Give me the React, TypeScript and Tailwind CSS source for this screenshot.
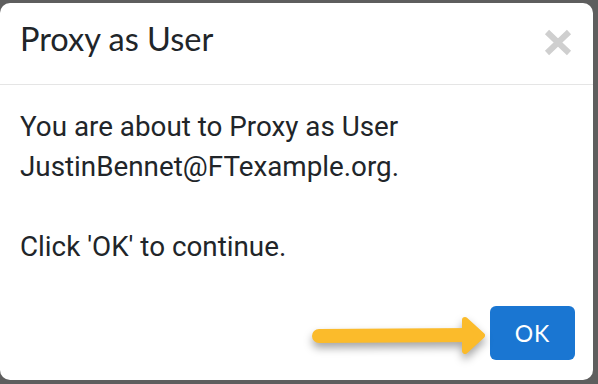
import React from "react";

export default function App() {
  return (
    <div className="w-[598px] h-[384px] bg-[#5e5e5e] pt-[3px] pr-[5px] pb-[4px] overflow-hidden">
      <div className="w-full h-full bg-white rounded-[10px] flex flex-col">
        <div className="h-[82px] border-b border-[#e5e5e5] flex items-start justify-between pl-[20px] pr-[21px] pt-[13px]">
          <div className="text-[32.5px] leading-[46px] text-[#212529]" style={{ fontFamily: "Lato, 'Noto Sans', sans-serif" }}>
            Proxy as User
          </div>
          <svg width="28" height="27" viewBox="0 0 28 27" className="mt-[13px]">
            <path d="M3 3 L25 24 M25 3 L3 24" stroke="#cfcfcf" strokeWidth="6" />
          </svg>
        </div>
        <div className="flex-1 pl-[20px] pt-[22px] text-[27.8px] leading-[40px] text-[#212529]" style={{ fontFamily: "Roboto, 'Liberation Sans', sans-serif" }}>
          <p>You are about to Proxy as User</p>
          <p>JustinBennet@FTexample.org.</p>
          <p className="mt-[40px]">Click 'OK' to continue.</p>
        </div>
        <div className="flex items-center justify-end pr-[18px] pb-[20px]">
          <svg width="190" height="50" viewBox="0 0 190 50" className="mr-[2px] drop-shadow-[0_5px_4px_rgba(0,0,0,0.35)]">
            <line x1="21" y1="28" x2="175" y2="27" stroke="#fbbb2b" strokeWidth="14" strokeLinecap="round" />
            <polygon points="167,12 184,27.5 167,43" fill="#fbbb2b" stroke="#fbbb2b" strokeWidth="6" strokeLinejoin="round" />
          </svg>
          <button className="w-[85px] h-[54px] rounded-[6px] bg-[#1a76d2] text-white text-[23px] tracking-[1px]" style={{ fontFamily: "Lato, 'Noto Sans', sans-serif" }}>
            OK
          </button>
        </div>
      </div>
    </div>
  );
}
